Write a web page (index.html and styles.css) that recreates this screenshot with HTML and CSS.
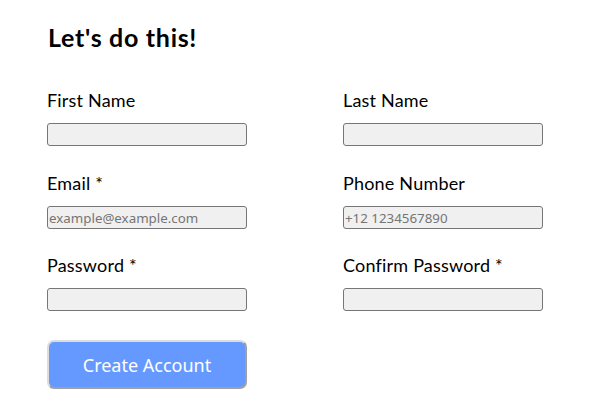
FILE: index.html
```html
<!DOCTYPE html>
<html lang="en">
<head>
<meta charset="utf-8">
<title>Sign up</title>
<link rel="stylesheet" href="styles.css">
</head>
<body>
<main class="page">
  <h1 class="title">Let's do this!</h1>
  <form class="form">
    <div class="grid">
      <div class="field">
        <label class="label" for="fn">First Name</label>
        <input class="input" id="fn" type="text">
      </div>
      <div class="field">
        <label class="label" for="ln">Last Name</label>
        <input class="input" id="ln" type="text">
      </div>
      <div class="field">
        <label class="label" for="em">Email *</label>
        <input class="input" id="em" type="email" placeholder="example@example.com">
      </div>
      <div class="field">
        <label class="label" for="ph">Phone Number</label>
        <input class="input" id="ph" type="tel" placeholder="+12 1234567890">
      </div>
      <div class="field">
        <label class="label" for="pw">Password *</label>
        <input class="input" id="pw" type="password">
      </div>
      <div class="field">
        <label class="label" for="pw2">Confirm Password *</label>
        <input class="input" id="pw2" type="password">
      </div>
    </div>
    <button class="button" type="button">Create Account</button>
  </form>
</main>
</body>
</html>
```

FILE: styles.css
```css
html, body {
  margin: 0;
  padding: 0;
  background: #ffffff;
}

.page {
  padding: 22px 0 0 47px;
  font-family: "Lato", "Liberation Sans", sans-serif;
  color: #000;
}

.title {
  margin: 0 0 38px 1px;
  font-size: 25px;
  line-height: 30px;
  font-weight: 700;
  letter-spacing: 0.7px;
}

.form {
  display: flex;
  flex-direction: column;
  align-items: flex-start;
  gap: 29px;
}

.grid {
  display: grid;
  grid-template-columns: 200px 200px;
  column-gap: 96px;
  row-gap: 26.5px;
}

.field {
  display: flex;
  flex-direction: column;
  gap: 12px;
}

.label {
  padding-left: 0;
  font-size: 18px;
  line-height: 21px;
  font-weight: 400;
  letter-spacing: 0.2px;
}

.input {
  box-sizing: border-box;
  width: 200px;
  height: 23px;
  margin: 0;
  padding: 1px 2px 0 1px;
  border: 1px solid #767676;
  border-radius: 3px;
  background: #f0f0f0;
  font-family: "Noto Sans", "Open Sans", sans-serif;
  font-size: 13.33px;
  color: #000;
}

.input::placeholder {
  color: #757575;
}

.button {
  box-sizing: border-box;
  width: 200px;
  height: 49px;
  margin: 0;
  border: 2px solid;
  border-color: #dcdcdc #a0a0a0 #a0a0a0 #dcdcdc;
  border-radius: 7px;
  background: #6699ff;
  color: #ffffff;
  font-family: "Noto Sans", "Open Sans", sans-serif;
  font-size: 18px;
}
```
